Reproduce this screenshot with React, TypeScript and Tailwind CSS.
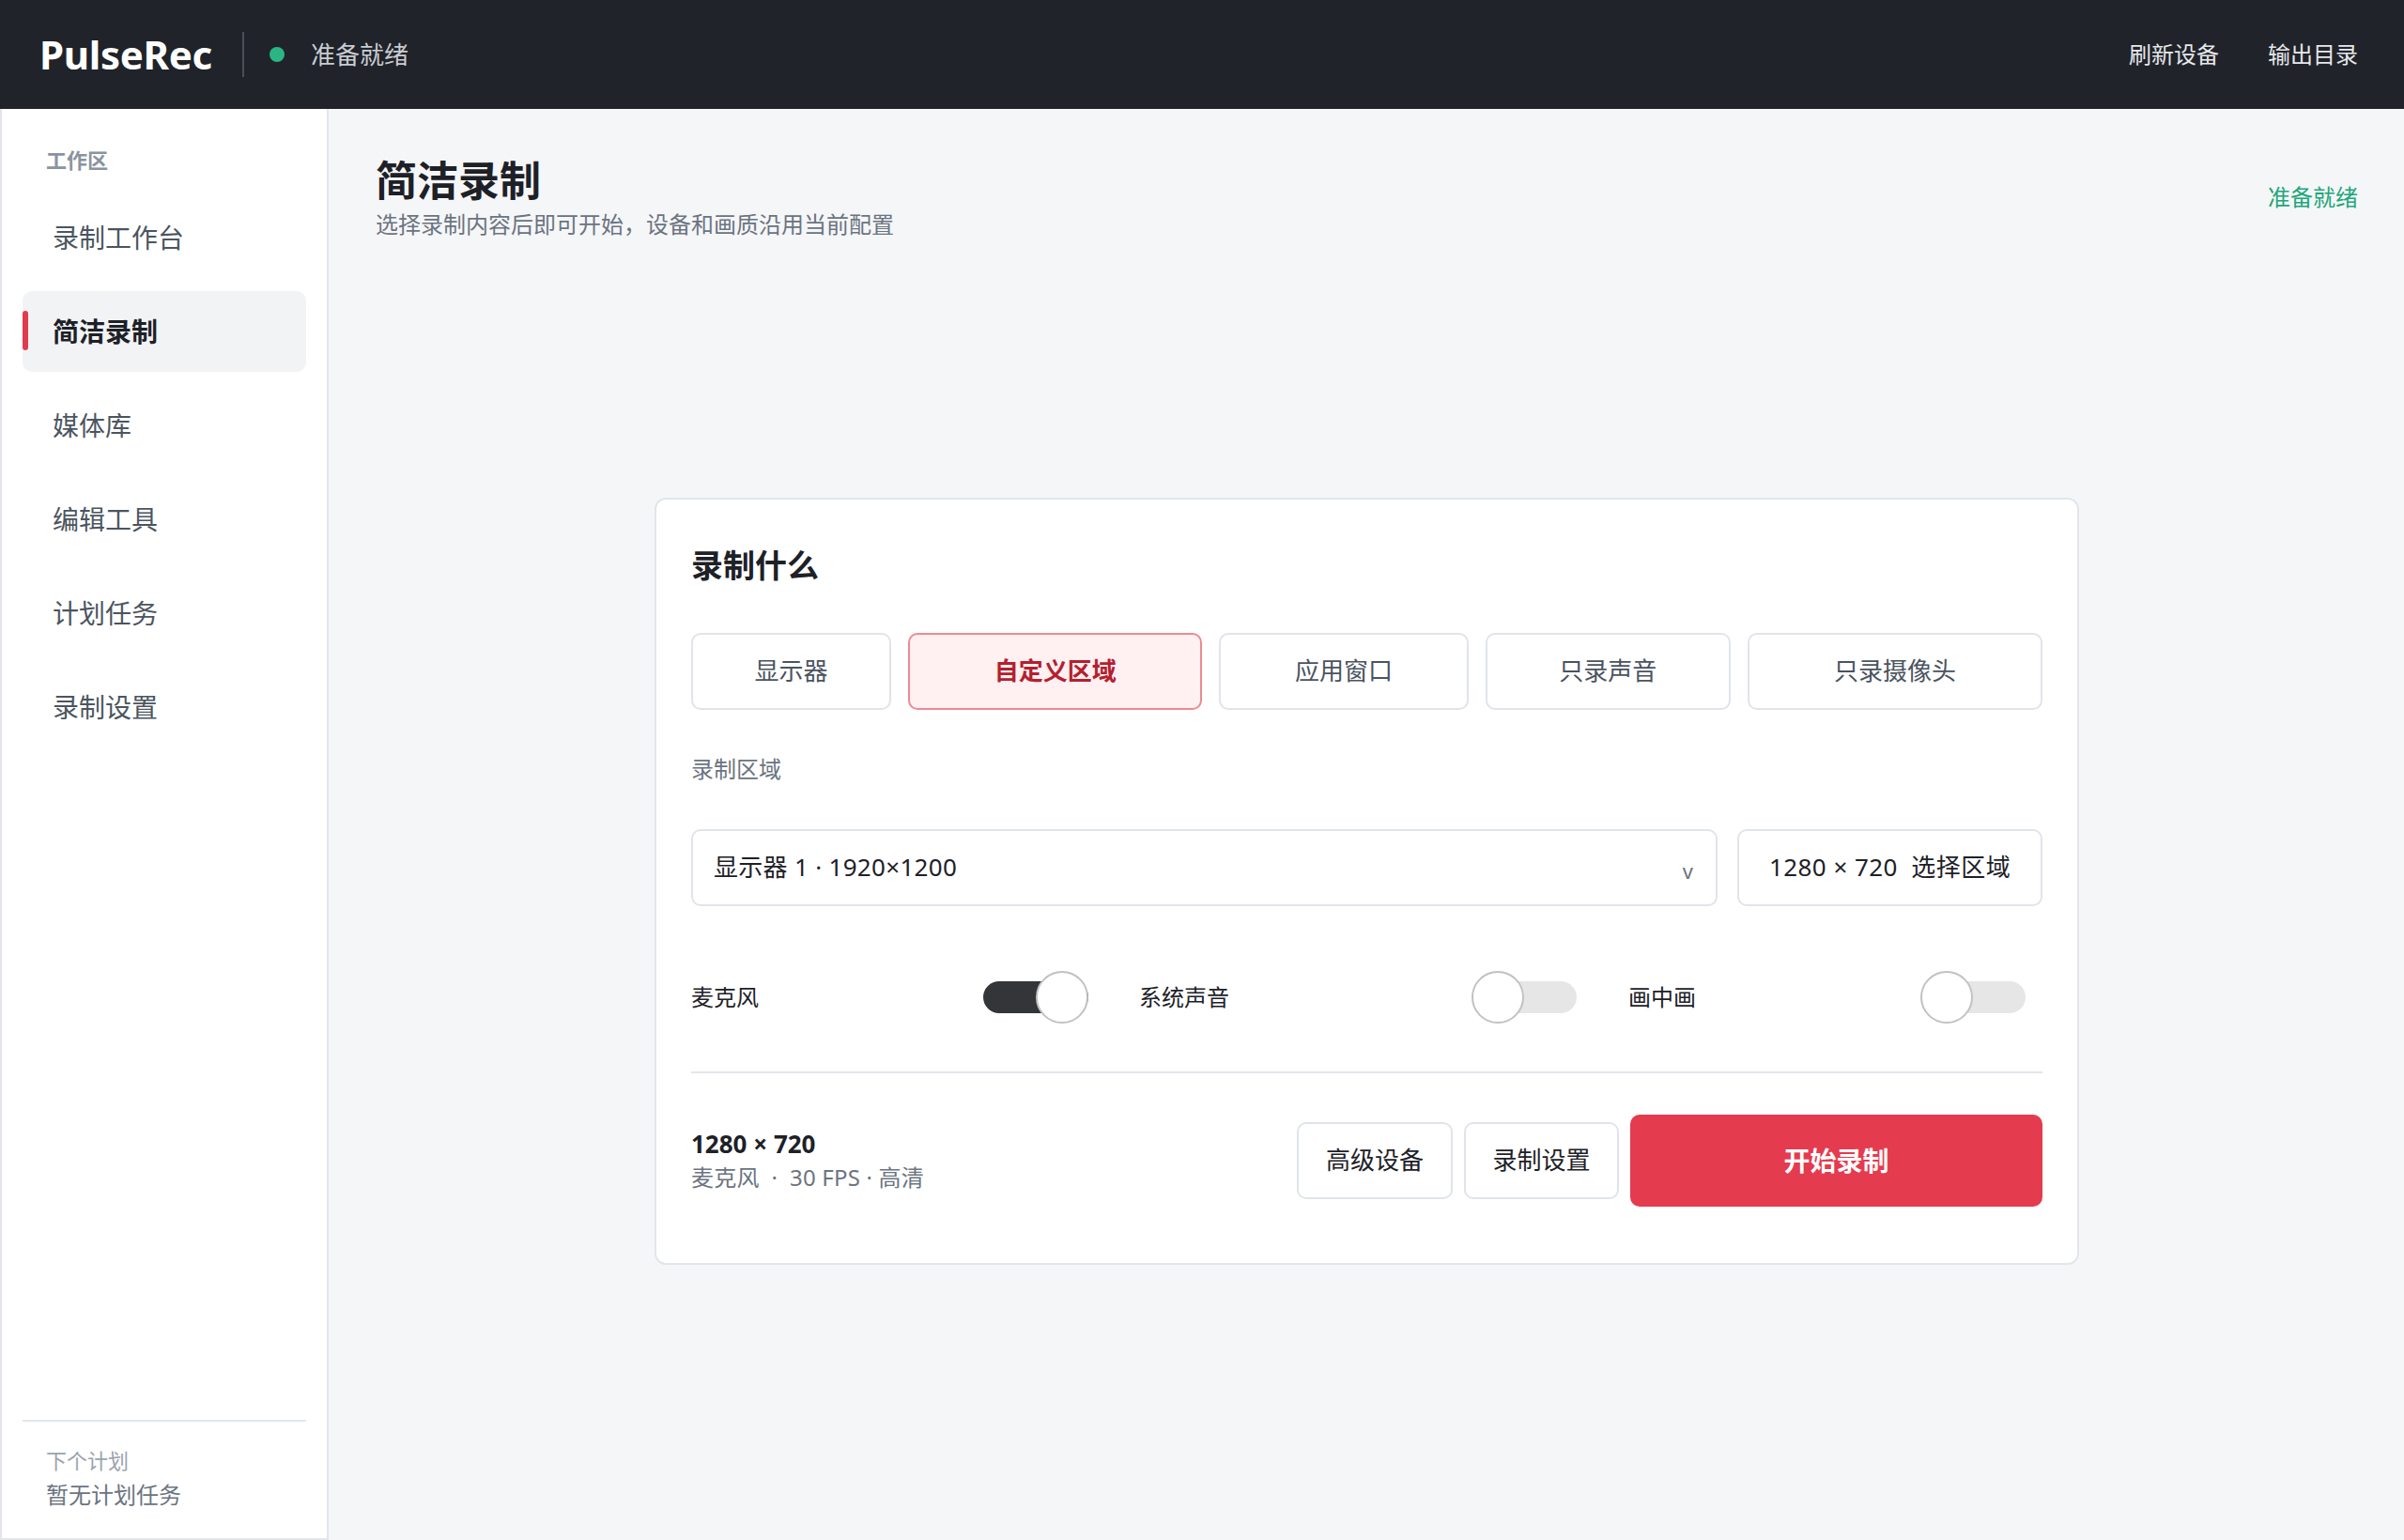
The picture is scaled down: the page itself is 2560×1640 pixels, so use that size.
import React from "react";

function Toggle({ on }: { on: boolean }) {
  return (
    <div className="relative w-[112px] h-[56px] flex items-center">
      <div className={on ? "w-full h-[34px] rounded-full bg-[#333538]" : "w-full h-[34px] rounded-full bg-[#e6e6e6]"} />
      <div
        className={
          on
            ? "absolute right-0 top-0 w-[56px] h-[56px] rounded-full bg-white border-2 border-[#c2c2c2]"
            : "absolute left-0 top-0 w-[56px] h-[56px] rounded-full bg-white border-2 border-[#c2c2c2]"
        }
      />
    </div>
  );
}

const navItems = ["录制工作台", "简洁录制", "媒体库", "编辑工具", "计划任务", "录制设置"];

const tabs = [
  { label: "显示器", active: false },
  { label: "自定义区域", active: true },
  { label: "应用窗口", active: false },
  { label: "只录声音", active: false },
  { label: "只录摄像头", active: false },
];

export default function App() {
  return (
    <div className="w-[2560px] h-[1640px] flex flex-col bg-[#f5f6f8] font-['Noto_Sans','Noto_Sans_CJK_SC',sans-serif] overflow-hidden">
      {/* Top bar */}
      <header className="h-[116px] shrink-0 bg-[#202329] flex items-center justify-between pl-[42px] pr-[49px]">
        <div className="flex items-center">
          <span className="text-[42px] font-bold text-white leading-none tracking-[-0.3px]">PulseRec</span>
          <div className="ml-[32px] w-[2px] h-[48px] bg-[#4a4f57]" />
          <div className="ml-[27px] w-[16px] h-[16px] rounded-full bg-[#2bb583]" />
          <span className="ml-[28px] text-[26px] text-[#c9cdd3]">准备就绪</span>
        </div>
        <div className="flex items-center gap-[52px] text-[24px] text-[#e6e8eb]">
          <span>刷新设备</span>
          <span>输出目录</span>
        </div>
      </header>

      <div className="flex flex-1 min-h-0">
        {/* Sidebar */}
        <aside className="w-[350px] shrink-0 bg-white border-x-2 border-b-2 border-[#e2e6eb] flex flex-col px-[22px] pt-[38px]">
          <div className="pl-[25px] text-[22px] leading-[32px] font-bold text-[#8a949f]">工作区</div>
          <nav className="mt-[24px] flex flex-col gap-[14px]">
            {navItems.map((item) => {
              const active = item === "简洁录制";
              return (
                <div
                  key={item}
                  className={
                    active
                      ? "relative h-[86px] rounded-[10px] bg-[#f1f3f5] flex items-center pl-[32px] text-[28px] font-bold text-[#1d2127]"
                      : "relative h-[86px] rounded-[10px] flex items-center pl-[32px] text-[28px] text-[#4b5560]"
                  }
                >
                  {active && (
                    <div className="absolute left-0 top-[21px] w-[6px] h-[42px] rounded-full bg-[#e03c4e]" />
                  )}
                  {item}
                </div>
              );
            })}
          </nav>
          <div className="mt-auto border-t-2 border-[#e2e6eb] pt-[25px] pb-[29px] pl-[25px]">
            <div className="text-[22px] leading-[32px] text-[#9aa3ad]">下个计划</div>
            <div className="mt-[4px] text-[24px] leading-[34px] text-[#6b7480]">暂无计划任务</div>
          </div>
        </aside>

        {/* Main */}
        <main className="flex-1 min-w-0 flex flex-col pl-[50px] pr-[49px] pt-[48px] pb-[20px]">
          <div className="flex items-center justify-between">
            <div>
              <h1 className="text-[44px] leading-[56px] font-bold text-[#1d2127]">简洁录制</h1>
              <p className="mt-[2px] text-[24px] leading-[34px] text-[#6b7480]">
                选择录制内容后即可开始，设备和画质沿用当前配置
              </p>
            </div>
            <span className="text-[24px] text-[#21a67a]">准备就绪</span>
          </div>

          <div className="flex-1 flex items-center justify-center">
            <div className="w-[1517px] bg-white border-2 border-[#e2e6eb] rounded-[12px] px-[37px] pt-[48px] pb-[60px]">
              <h2 className="text-[34px] leading-[44px] font-bold text-[#1d2127]">录制什么</h2>

              <div className="mt-[50px] grid grid-cols-[213fr_313fr_265fr_261fr_314fr] gap-[18px]">
                {tabs.map((t) =>
                  t.active ? (
                    <div
                      key={t.label}
                      className="h-[82px] rounded-[10px] border-2 border-[#ec8a94] bg-[#fff0f1] flex items-center justify-center text-[26px] font-bold text-[#b4202e]"
                    >
                      {t.label}
                    </div>
                  ) : (
                    <div
                      key={t.label}
                      className="h-[82px] rounded-[10px] border-2 border-[#e0e4ea] bg-white flex items-center justify-center text-[26px] text-[#4a5360]"
                    >
                      {t.label}
                    </div>
                  )
                )}
              </div>

              <div className="mt-[47px] text-[24px] leading-[32px] text-[#6b7480]">录制区域</div>

              <div className="mt-[48px] flex gap-[21px]">
                <div className="flex-1 h-[82px] rounded-[10px] border-2 border-[#e0e4ea] bg-white flex items-center justify-between pl-[22px] pr-[24px]">
                  <span className="text-[26px] tracking-[0.3px] text-[#1d2127]">显示器 1 · 1920×1200</span>
                  <span className="mt-[8px] text-[22px] text-[#6b7480]">v</span>
                </div>
                <div className="w-[325px] h-[82px] rounded-[10px] border-2 border-[#e0e4ea] bg-white flex items-center justify-center text-[26px] tracking-[0.45px] text-[#1d2127] whitespace-pre">
                  1280 × 720  选择区域
                </div>
              </div>

              <div className="mt-[69px] grid grid-cols-[477px_521px_1fr] h-[56px]">
                <div className="flex items-center justify-between pr-[54px]">
                  <span className="text-[24px] text-[#1d2127]">麦克风</span>
                  <Toggle on={true} />
                </div>
                <div className="flex items-center justify-between pr-[55px]">
                  <span className="text-[24px] text-[#1d2127]">系统声音</span>
                  <Toggle on={false} />
                </div>
                <div className="flex items-center justify-between pr-[18px]">
                  <span className="text-[24px] text-[#1d2127]">画中画</span>
                  <Toggle on={false} />
                </div>
              </div>

              <div className="mt-[51px] h-[2px] bg-[#e2e6eb]" />

              <div className="mt-[44px] flex items-center justify-between">
                <div>
                  <div className="text-[26px] leading-[36px] font-bold text-[#1d2127]">1280 × 720</div>
                  <div className="text-[24px] leading-[36px] tracking-[0.2px] text-[#6b7480] whitespace-pre">麦克风  ·  30 FPS · 高清</div>
                </div>
                <div className="flex items-center gap-[12px]">
                  <button className="w-[166px] h-[82px] rounded-[10px] border-2 border-[#e0e4ea] bg-white text-[26px] text-[#1d2127]">
                    高级设备
                  </button>
                  <button className="w-[165px] h-[82px] rounded-[10px] border-2 border-[#e0e4ea] bg-white text-[26px] text-[#1d2127]">
                    录制设置
                  </button>
                  <button className="w-[439px] h-[98px] rounded-[10px] bg-[#e43b4f] text-[28px] font-bold text-white">
                    开始录制
                  </button>
                </div>
              </div>
            </div>
          </div>
        </main>
      </div>
    </div>
  );
}
